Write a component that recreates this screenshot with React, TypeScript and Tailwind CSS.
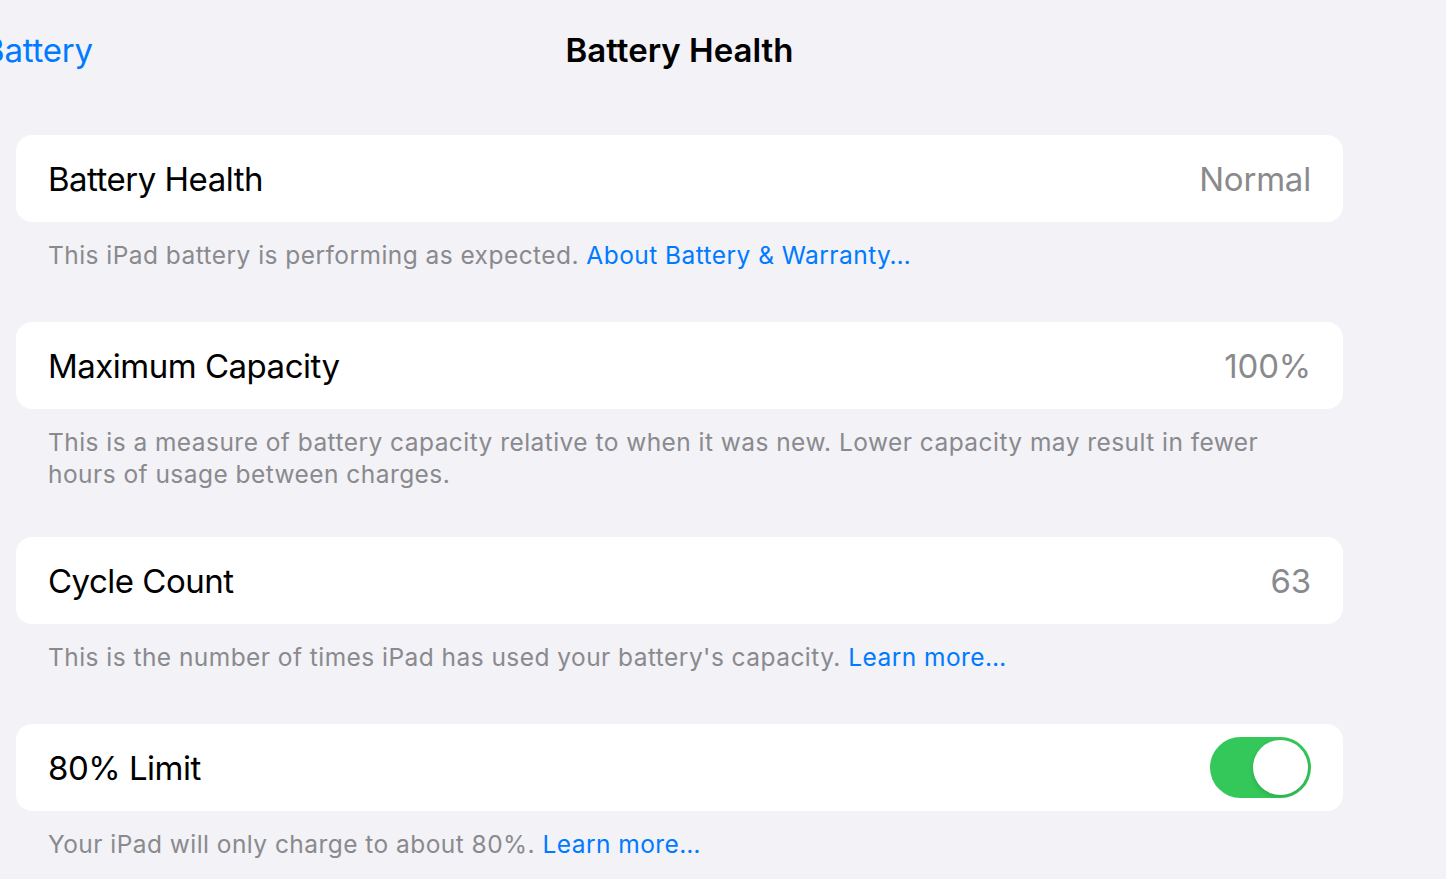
import React from 'react';

const font = { fontFamily: 'Inter, "Noto Sans", sans-serif' };

function Row({ label, value, toggle }: { label: string; value?: string; toggle?: boolean }) {
  return (
    <div className="flex h-[87px] items-center justify-between rounded-[16px] bg-white pl-[32px] pr-[32px] pt-[2px]">
      <span className="text-[33px] tracking-[-0.5px] text-black">{label}</span>
      {value && <span className="text-[33px] tracking-[-0.2px] text-[#8a8a8e]">{value}</span>}
      {toggle && (
        <div className="-mt-[2px] flex h-[61px] w-[101px] items-center justify-end rounded-full bg-[#34c759] pr-[3px]">
          <div className="h-[55px] w-[55px] rounded-full bg-white shadow-[0_2px_4px_rgba(0,0,0,0.15)]" />
        </div>
      )}
    </div>
  );
}

function Footer({ children, tight }: { children: React.ReactNode; tight?: boolean }) {
  return (
    <p
      className={
        tight
          ? 'pl-[32px] pr-[40px] pt-[17px] pb-[47px] text-[24.5px] leading-[32px] tracking-[0.45px] text-[#8a8a8e]'
          : 'pl-[32px] pr-[40px] pt-[17px] pb-[51px] text-[24.5px] leading-[32px] tracking-[0.45px] text-[#8a8a8e]'
      }
    >
      {children}
    </p>
  );
}

const Link = ({ children }: { children: React.ReactNode }) => (
  <span className="text-[#007aff]">{children}</span>
);

export default function App() {
  return (
    <div className="min-h-[879px] w-[1446px] overflow-hidden bg-[#f2f2f7]" style={font}>
      <div className="w-[1343px] pl-[16px]">
        {/* Navigation bar */}
        <div className="relative flex h-[101px] items-center justify-center pt-[1px]">
          <span className="absolute left-[-33px] text-[33px] tracking-[-0.2px] text-[#007aff]">Battery</span>
          <h1 className="text-[33px] font-semibold tracking-[0px] text-black">Battery Health</h1>
        </div>

        <div className="pt-[34px]">
          <Row label="Battery Health" value="Normal" />
          <Footer>
            This iPad battery is performing as expected. <Link>About Battery &amp; Warranty…</Link>
          </Footer>

          <Row label="Maximum Capacity" value="100%" />
          <Footer tight>
            This is a measure of battery capacity relative to when it was new. Lower capacity may result in fewer
            hours of usage between charges.
          </Footer>

          <Row label="Cycle Count" value="63" />
          <Footer>
            This is the number of times iPad has used your battery's capacity. <Link>Learn more…</Link>
          </Footer>

          <Row label="80% Limit" toggle />
          <Footer>
            Your iPad will only charge to about 80%. <Link>Learn more…</Link>
          </Footer>
        </div>
      </div>
    </div>
  );
}
